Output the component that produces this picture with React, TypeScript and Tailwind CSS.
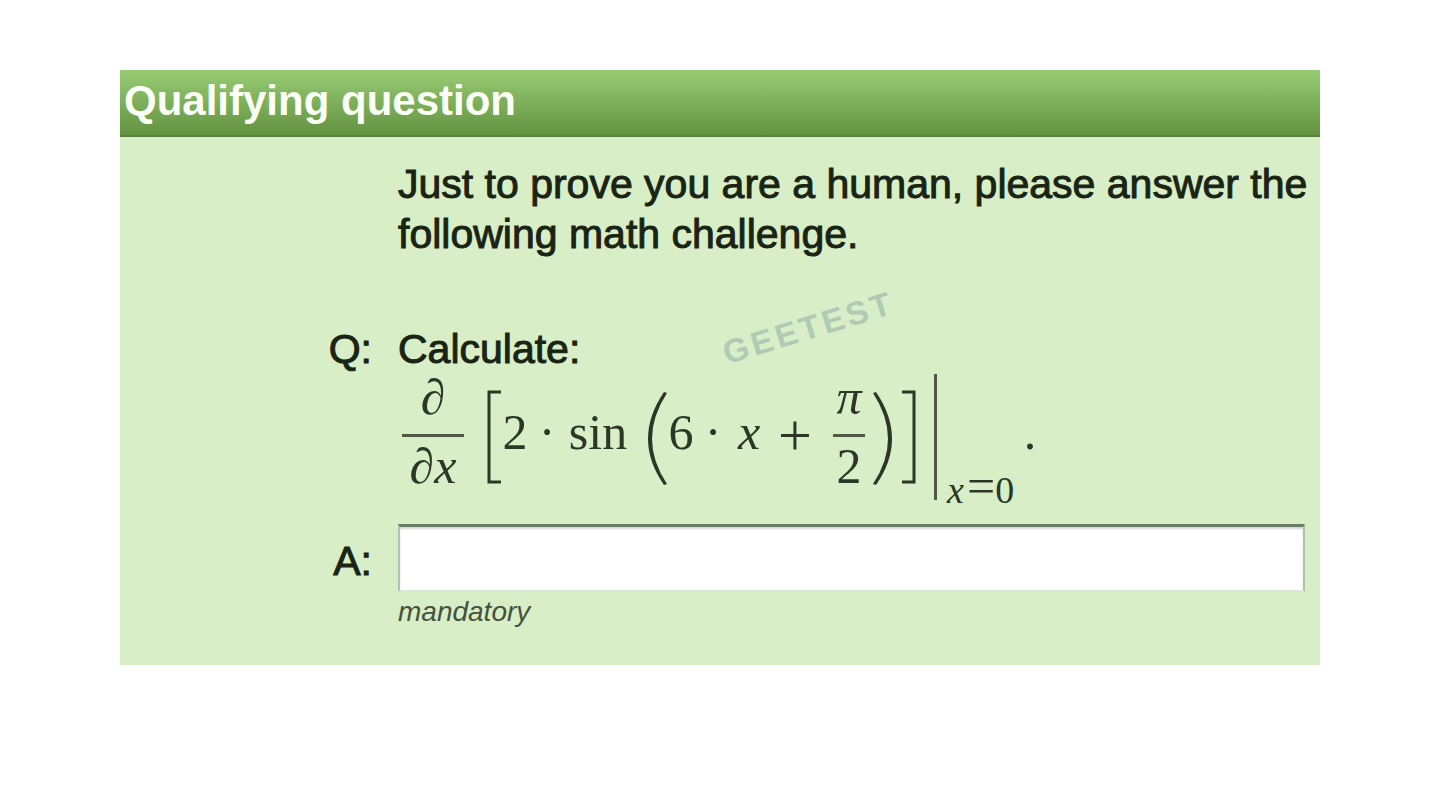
interface GlyphProps {
    children: string;
    width: string;
    italic?: boolean;
}

// One symbol of the formula, centred in its slot
function Glyph({ children, width, italic }: GlyphProps) {
    return (
        <span className={`${width} ${italic ? 'italic' : ''} shrink-0 flex justify-center whitespace-nowrap pb-[10px] leading-[50px]`}>
            {children}
        </span>
    );
}

function Bracket({ flip }: { flip?: boolean }) {
    return (
        <svg width="15" height="94" viewBox="0 0 15 94" className={flip ? 'shrink-0 -scale-x-100' : 'shrink-0'} aria-hidden="true">
            <path d="M15 2H3V92H15" fill="none" stroke="#2c3827" strokeWidth="3" />
        </svg>
    );
}

function Paren({ flip }: { flip?: boolean }) {
    return (
        <svg width="22" height="98" viewBox="0 0 22 98" className={flip ? 'shrink-0 -scale-x-100' : 'shrink-0'} aria-hidden="true">
            <path d="M19 4Q-13 51 19 97L22 96Q-8 51 22 5Z" fill="#2c3827" />
        </svg>
    );
}

function Formula() {
    return (
        <div className="flex items-center h-[126px] pl-1 font-['Liberation_Serif',serif] text-[50px] text-[#2c3827]">
            <div className="w-[62px] shrink-0 flex flex-col items-center pb-3">
                <span className="leading-[50px] italic">∂</span>
                <span className="w-full h-[3px] mt-3 mb-1 bg-[#4c5a44]" />
                <span className="leading-[50px] italic">∂x</span>
            </div>
            <span className="w-[22px] shrink-0" />
            <Bracket />
            <Glyph width="w-[28px]">2</Glyph>
            <Glyph width="w-[36px]">·</Glyph>
            <Glyph width="w-[66px]">sin</Glyph>
            <span className="w-[14px] shrink-0" />
            <Paren />
            <Glyph width="w-[28px]">6</Glyph>
            <Glyph width="w-[36px]">·</Glyph>
            <Glyph width="w-[36px]" italic>x</Glyph>
            <span className="w-[56px] shrink-0 flex justify-center pb-1 text-[60px] leading-[50px]">+</span>
            <span className="w-[10px] shrink-0" />
            <div className="w-[32px] shrink-0 flex flex-col items-center pb-3">
                <span className="leading-[50px] italic">π</span>
                <span className="w-full h-[3px] mt-3 mb-1 bg-[#4c5a44]" />
                <span className="leading-[50px]">2</span>
            </div>
            <span className="w-[8px] shrink-0" />
            <Paren flip />
            <span className="w-[7px] shrink-0" />
            <Bracket flip />
            <span className="w-[17px] shrink-0" />
            <span className="w-[3px] h-full shrink-0 bg-[#4c5a44]" />
            <span className="self-end shrink-0 flex items-baseline w-[86px] pl-[10px] text-[38px] leading-[20px]">
                <i className="w-[20px]">x</i>
                <span className="text-[50px]">=</span>
                <span>0</span>
            </span>
            <Glyph width="w-[14px]">.</Glyph>
        </div>
    );
}

export default function App() {
    return (
        <main className="min-h-screen bg-white pt-[70px] font-['Liberation_Sans',Arial,sans-serif] text-[#1a2414]">
            <section className="relative w-5/6 mx-auto bg-[#d8eec7]">
                <h1 className="h-[67px] pl-1 border-b-2 border-[#5b8241] bg-linear-to-b from-[#98cc74] to-[#649341] text-[42px] leading-[62px] font-bold text-[#fbfff5]">
                    Qualifying question
                </h1>

                <form className="grid grid-cols-[252px_1fr] gap-x-[26px] pt-[22px] pb-[33px] text-[41px] leading-[50px] [-webkit-text-stroke:1px]">
                    <p className="col-start-2">
                        Just to prove you are a human, please answer the following math challenge.
                    </p>

                    <div className="mt-[65px] text-right">Q:</div>
                    <div className="mt-[65px]">
                        <p>Calculate:</p>
                        <div className="[-webkit-text-stroke:0px]">
                            <Formula />
                        </div>
                    </div>

                    <label htmlFor="answer" className="mt-6 pt-3 text-right">A:</label>
                    <div className="mt-6 pr-[15px] [-webkit-text-stroke:0px]">
                        <input
                            id="answer"
                            type="text"
                            aria-describedby="answer-hint"
                            className="block w-full h-[68px] px-3 bg-white border-2 border-t-[3px] border-[#b3c1ab] border-t-[#6d7c68] border-b-[#dde6d8] shadow-[inset_0_2px_2px_#d5d8d5] outline-none"
                        />
                        <p id="answer-hint" className="text-[28px] leading-[40px] italic text-[#46523f]">mandatory</p>
                    </div>
                </form>

                {/* Watermark over the question */}
                <span className="absolute left-[600px] top-[238px] -rotate-17 text-[33px] leading-[40px] font-bold tracking-widest text-[#afcbb5] pointer-events-none">
                    GEETEST
                </span>
            </section>
        </main>
    );
}
